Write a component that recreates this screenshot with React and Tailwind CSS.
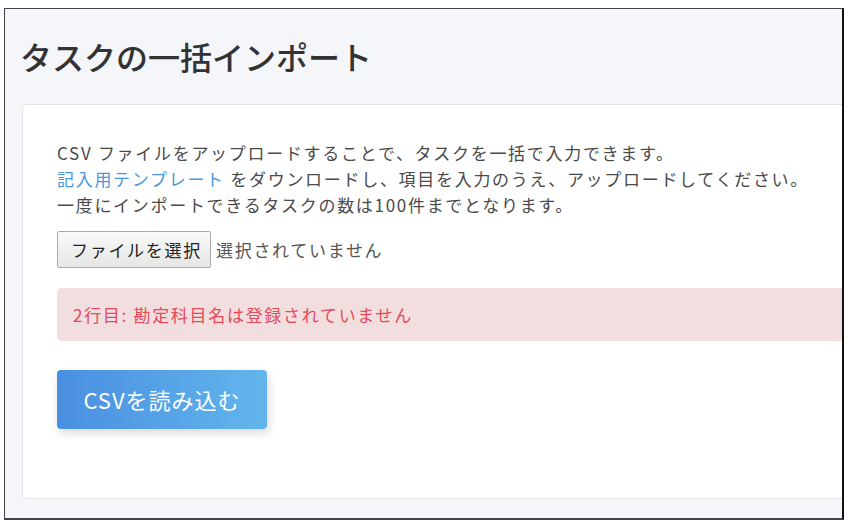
export default function App() {
  const font = { fontFamily: '"Noto Sans CJK JP", "Noto Sans", sans-serif' };
  return (
    <div className="w-[853px] h-[525px] bg-white pl-[4px] pt-[8px] overflow-hidden" style={font}>
      <div className="w-[840px] h-[512px] border-l border-t border-r-2 border-b-2 border-l-[#444] border-t-[#444] border-r-[#111] border-b-[#444] bg-[#f5f6fa] overflow-hidden">
        <div className="pl-[15px] pt-[27px]">
          <h1 className="text-[32px] leading-[40px] font-medium text-[#333]">タスクの一括インポート</h1>
        </div>
        <div className="ml-[17px] mt-[28px] w-[900px] h-[395px] bg-white border border-[#e3e3e3] rounded-[4px] pl-[34px] pt-[35px]">
          <div className="text-[17px] leading-[26px] tracking-[1.7px] text-[#4a4a4a]">
            <p>CSV ファイルをアップロードすることで、タスクを一括で入力できます。</p>
            <p>
              <a className="text-[#4a97dd]">記入用テンプレート</a> をダウンロードし、項目を入力のうえ、アップロードしてください。
            </p>
            <p>一度にインポートできるタスクの数は100件までとなります。</p>
          </div>
          <div className="mt-[13px] flex items-center">
            <button className="w-[154px] h-[37px] pl-[13px] text-left border border-[#a9a9a9] rounded-[2px] bg-gradient-to-b from-[#fafafa] to-[#e6e6e6] text-[17px] tracking-[1.7px] text-[#222]">
              ファイルを選択
            </button>
            <span className="ml-[5px] text-[17px] tracking-[1.7px] text-[#555]">選択されていません</span>
          </div>
          <div className="mt-[20px] w-[840px] h-[53px] rounded-[5px] bg-[#f2dedf] pl-[16px] flex items-center text-[17px] tracking-[1.7px] text-[#e4495c]">
            2行目: 勘定科目名は登録されていません
          </div>
          <button className="mt-[29px] w-[210px] h-[59px] rounded-[4px] bg-gradient-to-r from-[#4a8fe0] to-[#62b5ec] text-white text-[22px] tracking-[1px] shadow-[2px_4px_8px_rgba(0,0,0,0.15)] flex items-center justify-center">
            CSVを読み込む
          </button>
        </div>
      </div>
    </div>
  );
}
